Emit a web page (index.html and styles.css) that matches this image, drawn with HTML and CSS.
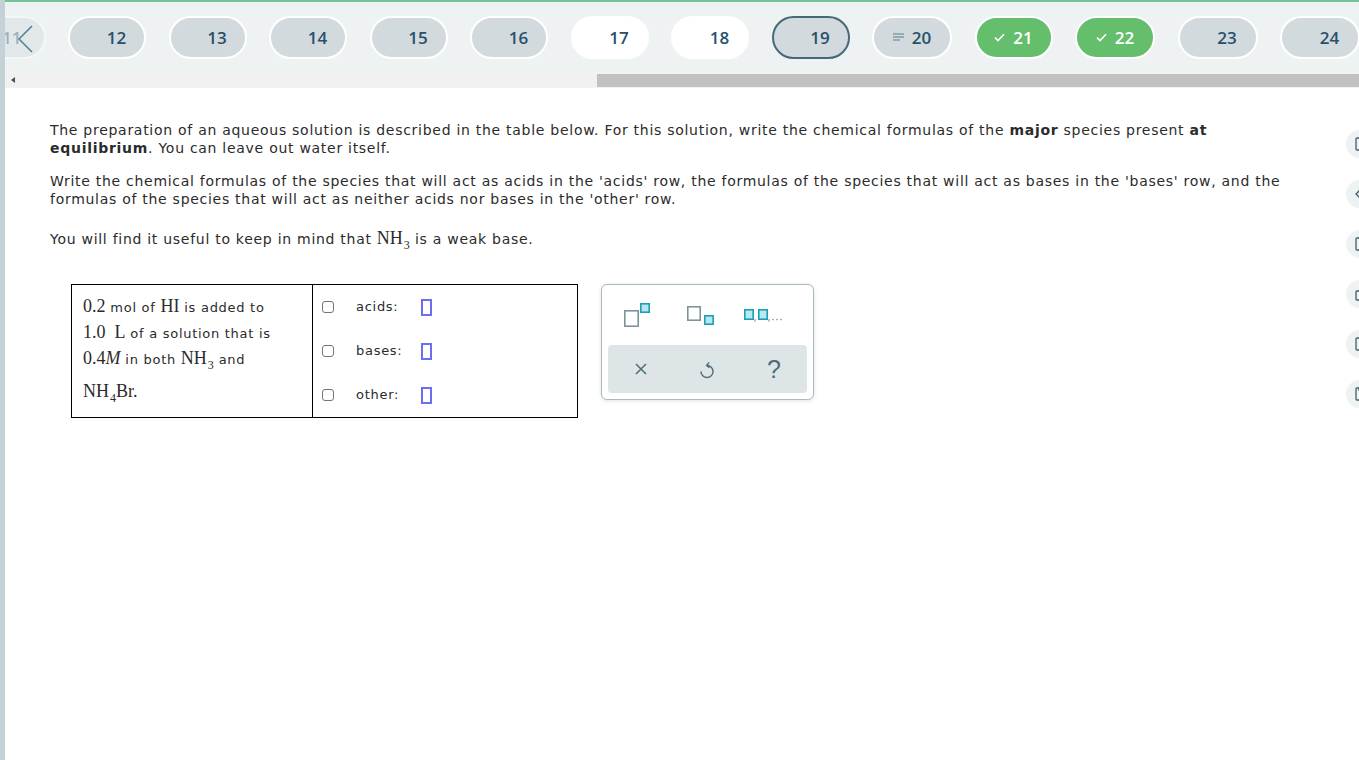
FILE: index.html
```html
<!DOCTYPE html>
<html lang="en">
<head>
  <meta charset="UTF-8" />
  <title>Acids and Bases - Question 19</title>
  <meta name="viewport" content="width=device-width, initial-scale=1.0"/>
  <link rel="stylesheet" href="styles.css">
</head>
<body>
  <div class="page">
    <div class="rail"></div>

    <div class="main">
      <header class="topbar">
        <nav class="steps">
          <span class="pill pill-ghost"><span class="pill-icon"></span>11</span>
          <span class="pill"><span class="pill-icon"></span>12</span>
          <span class="pill"><span class="pill-icon"></span>13</span>
          <span class="pill"><span class="pill-icon"></span>14</span>
          <span class="pill"><span class="pill-icon"></span>15</span>
          <span class="pill"><span class="pill-icon"></span>16</span>
          <span class="pill pill-open"><span class="pill-icon"></span>17</span>
          <span class="pill pill-open"><span class="pill-icon"></span>18</span>
          <span class="pill pill-current"><span class="pill-icon"></span>19</span>
          <span class="pill pill-wide">
            <span class="pill-icon">
              <svg width="11" height="8" viewBox="0 0 11 8"><path d="M0 1h11M0 4h11M0 7h7" stroke="#5d7d8c" stroke-width="1.2"/></svg>
            </span>20
          </span>
          <span class="pill pill-done">
            <span class="pill-icon">
              <svg width="11" height="9" viewBox="0 0 11 9"><path d="M1 4.6l3 3L10 1.2" fill="none" stroke="#fff" stroke-width="1.6"/></svg>
            </span>21
          </span>
          <span class="pill pill-done pill-wide">
            <span class="pill-icon">
              <svg width="11" height="9" viewBox="0 0 11 9"><path d="M1 4.6l3 3L10 1.2" fill="none" stroke="#fff" stroke-width="1.6"/></svg>
            </span>22
          </span>
          <span class="pill pill-wide"><span class="pill-icon"></span>23</span>
          <span class="pill pill-wide"><span class="pill-icon"></span>24</span>
        </nav>

        <!-- previous arrow sits over the faded pill -->
        <span class="back">
          <svg width="16" height="28" viewBox="0 0 16 28"><path d="M15 1L2 14l13 13" fill="none" stroke="#567d90" stroke-width="1.5"/></svg>
        </span>

        <div class="hscroll">
          <span class="hscroll-arrow"></span>
          <span class="hscroll-thumb"></span>
        </div>
      </header>

      <section class="content">
        <div class="question">
          <p>The preparation of an aqueous solution is described in the table below. For this solution, write the chemical formulas of the <b>major</b> species present <b>at equilibrium</b>. You can leave out water itself.</p>
          <p>Write the chemical formulas of the species that will act as acids in the 'acids' row, the formulas of the species that will act as bases in the 'bases' row, and the formulas of the species that will act as neither acids nor bases in the 'other' row.</p>
          <p class="hint">You will find it useful to keep in mind that <span class="m">NH<sub>3</sub></span> is a weak base.</p>

          <div class="answer">
            <table class="prep">
              <tr>
                <td class="prep-desc">
                  <span class="m">0.2</span> mol of <span class="m">HI</span> is added to<br>
                  <span class="m">1.0&nbsp; L</span> of a solution that is<br>
                  <span class="m">0.4<i>M</i></span> in both <span class="m">NH<sub>3</sub></span> and<br>
                  <span class="m last">NH<sub>4</sub>Br.</span>
                </td>
                <td class="prep-slots">
                  <div class="slot"><span class="check"></span><span class="slot-label">acids:</span><span class="blank"></span></div>
                  <div class="slot"><span class="check"></span><span class="slot-label">bases:</span><span class="blank"></span></div>
                  <div class="slot"><span class="check"></span><span class="slot-label">other:</span><span class="blank"></span></div>
                </td>
              </tr>
            </table>

            <div class="toolbox">
              <div class="tool-row">
                <span class="tool">
                  <svg width="28" height="26" viewBox="0 0 28 26"><rect x="1.8" y="8.8" width="13.4" height="15.4" fill="#fff" stroke="#7d949c" stroke-width="1.6"/><rect x="17.8" y="1.8" width="8.4" height="8.4" fill="#b9e7f0" stroke="#1e9fb2" stroke-width="1.6"/></svg>
                </span>
                <span class="tool">
                  <svg width="28" height="21" viewBox="0 0 28 21"><rect x="1.8" y="1.8" width="12.4" height="13.4" fill="#fff" stroke="#7d949c" stroke-width="1.6"/><rect x="18.8" y="10.8" width="8.4" height="8.4" fill="#b9e7f0" stroke="#1e9fb2" stroke-width="1.6"/></svg>
                </span>
                <span class="tool">
                  <svg width="42" height="15" viewBox="0 0 42 15"><rect x="1.8" y="1.8" width="8.4" height="9.4" fill="#b9e7f0" stroke="#1e9fb2" stroke-width="1.6"/><path d="M12.4 11.2l-0.8 2.4M26.4 11.2l-0.8 2.4" stroke="#7d949c" stroke-width="1.1"/><rect x="15.8" y="1.8" width="8.4" height="9.4" fill="#b9e7f0" stroke="#1e9fb2" stroke-width="1.6"/><circle cx="30" cy="11.6" r="0.8" fill="#7d949c"/><circle cx="34" cy="11.6" r="0.8" fill="#7d949c"/><circle cx="38" cy="11.6" r="0.8" fill="#7d949c"/></svg>
                </span>
              </div>
              <div class="tool-actions">
                <span class="tool">
                  <svg width="12" height="12" viewBox="0 0 12 12"><path d="M1 1l10 10M11 1L1 11" stroke="#4d6c7a" stroke-width="1.5"/></svg>
                </span>
                <span class="tool">
                  <svg width="16" height="19" viewBox="0 0 16 19"><path d="M8 5.5A6 6 0 1 1 2 11.5" fill="none" stroke="#4d6c7a" stroke-width="1.4"/><path d="M10.2 2.4L7.6 5.5l2.8 2.3" fill="none" stroke="#4d6c7a" stroke-width="1.4"/></svg>
                </span>
                <span class="tool tool-help">?</span>
              </div>
            </div>
          </div>
        </div>

        <aside class="sidetools">
          <span class="side-btn"><svg width="14" height="14" viewBox="0 0 14 14"><rect x="1" y="1" width="12" height="12" rx="1" fill="none" stroke="#3f5e6c" stroke-width="1.3"/></svg></span>
          <span class="side-btn"><svg width="14" height="14" viewBox="0 0 14 14"><path d="M5 3L1 7l4 4" fill="none" stroke="#3f5e6c" stroke-width="1.3"/></svg></span>
          <span class="side-btn"><svg width="14" height="14" viewBox="0 0 14 14"><rect x="1" y="1" width="12" height="12" rx="1" fill="none" stroke="#3f5e6c" stroke-width="1.3"/></svg></span>
          <span class="side-btn"><svg width="14" height="14" viewBox="0 0 14 14"><rect x="1" y="4" width="12" height="9" rx="1" fill="none" stroke="#3f5e6c" stroke-width="1.3"/></svg></span>
          <span class="side-btn"><svg width="14" height="14" viewBox="0 0 14 14"><rect x="1" y="1" width="12" height="12" rx="1" fill="none" stroke="#3f5e6c" stroke-width="1.3"/></svg></span>
          <span class="side-btn"><svg width="14" height="14" viewBox="0 0 14 14"><rect x="1" y="1" width="12" height="12" rx="1" fill="none" stroke="#3f5e6c" stroke-width="1.3"/><path d="M4 1v3" stroke="#3f5e6c" stroke-width="1.3"/></svg></span>
        </aside>
      </section>
    </div>
  </div>
</body>
</html>
```

FILE: styles.css
```css
:root {
  --rail: #c4d1d7;
  --bar-bg: #eef2f3;
  --pill-bg: #d2dadd;
  --pill-text: #27506a;
  --done: #65be6b;
  --teal-dark: #46697a;
  --blank: #6a6ef2;
}

body {
  margin: 0;
  font-family: "DejaVu Sans", Verdana, sans-serif;
  color: #2b2b2b;
  background: #fff;
}

.page {
  display: flex;
  min-height: 100vh;
}

.rail {
  width: 5px;
  flex-shrink: 0;
  background: var(--rail);
}

.main {
  flex: 1;
  min-width: 0;
  overflow: hidden;
}

/* top question navigator */
.topbar {
  position: relative;
  background: var(--bar-bg);
  border-top: 2px solid #74c396;
}

.steps {
  display: flex;
  align-items: center;
  gap: 22.5px;
  height: 70px;
  margin-left: -37.5px;
}

.pill {
  flex: 0 0 78px;
  height: 43px;
  box-sizing: border-box;
  border: 2px solid #fff;
  border-radius: 22px;
  background: var(--pill-bg);
  display: flex;
  align-items: center;
  justify-content: center;
  gap: 8px;
  font-family: "Open Sans", sans-serif;
  font-weight: 600;
  font-size: 17px;
  color: var(--pill-text);
}

.pill-icon {
  width: 11px;
  display: flex;
  align-items: center;
}

.pill-wide {
  flex-basis: 80px;
}

.pill-ghost {
  opacity: 0.4;
  justify-content: flex-end;
  padding-right: 22px;
}

.pill-open {
  background: #fff;
}

.pill-current {
  border-color: var(--teal-dark);
}

.pill-done {
  background: var(--done);
  color: #fff;
}

.back {
  position: absolute;
  left: 12px;
  top: 23px;
  display: flex;
}

.hscroll {
  display: flex;
  align-items: center;
  height: 16px;
  background: #f1f1f1;
}

.hscroll-arrow {
  width: 0;
  height: 0;
  margin-left: 6px;
  border-style: solid;
  border-width: 3.5px 4px 3.5px 0;
  border-color: transparent #505050 transparent transparent;
}

.hscroll-thumb {
  margin-left: auto;
  width: 762px;
  height: 13px;
  background: #c1c1c1;
}

/* question body */
.content {
  display: flex;
  padding: 33px 0 40px 45px;
}

.question {
  flex: 1;
  min-width: 0;
  padding-right: 52px;
  font-size: 14px;
  line-height: 18px;
  letter-spacing: 0.72px;
}

.question p {
  margin: 0 0 15px;
}

.question .hint {
  padding-top: 6px;
}

.m {
  font-family: "Liberation Serif", "Times New Roman", serif;
  font-size: 18px;
  letter-spacing: 0;
}

.m sub {
  font-size: 12px;
  line-height: 0;
  vertical-align: -0.45em;
  padding-left: 1px;
}

.answer {
  display: flex;
  align-items: flex-start;
  gap: 23px;
  margin: 36px 0 0 21px;
}

.prep {
  border-collapse: collapse;
  font-size: 13px;
}

.prep td {
  border: 1px solid #000;
  vertical-align: top;
  padding: 0;
}

.prep-desc {
  width: 219px;
  padding: 10px 10px 0 11px !important;
  line-height: 26px;
}

.prep-desc .m {
  line-height: 1;
}

.prep-desc .last {
  display: inline-block;
  margin-top: 9px;
}

.prep-slots {
  width: 264px;
}

.slot {
  display: flex;
  align-items: center;
  height: 44px;
  padding-left: 9px;
}

.check {
  width: 12px;
  height: 12px;
  box-sizing: border-box;
  border: 1px solid #767676;
  border-radius: 3px;
  margin-right: 22px;
}

.slot-label {
  width: 65px;
}

.blank {
  width: 11px;
  height: 17px;
  box-sizing: border-box;
  border: 2px solid var(--blank);
}

/* formula toolbox */
.toolbox {
  width: 213px;
  box-sizing: border-box;
  background: #fff;
  border: 1px solid #a8bac2;
  border-radius: 6px;
  box-shadow: 0 1px 4px rgba(0, 0, 0, 0.12);
  padding: 0 6px 6px;
  letter-spacing: 0;
}

.tool-row,
.tool-actions {
  display: grid;
  grid-template-columns: repeat(3, 1fr);
  align-items: center;
  justify-items: center;
}

.tool-row {
  height: 60px;
  margin: 0 11px 0 -3px;
}

.tool-actions {
  height: 48px;
  background: #dde5e7;
  border-radius: 4px;
}

.tool {
  display: flex;
}

.tool-help {
  font-family: "Liberation Sans", Arial, sans-serif;
  font-size: 25px;
  color: #4d6c7a;
}

/* clipped side toolbar */
.sidetools {
  width: 13px;
  flex-shrink: 0;
  overflow: hidden;
  padding-top: 9px;
  display: flex;
  flex-direction: column;
  gap: 22px;
}

.side-btn {
  flex-shrink: 0;
  width: 40px;
  height: 28px;
  border-radius: 14px;
  background: var(--bar-bg);
  display: flex;
  align-items: center;
  padding-left: 9px;
  box-sizing: border-box;
}
```
